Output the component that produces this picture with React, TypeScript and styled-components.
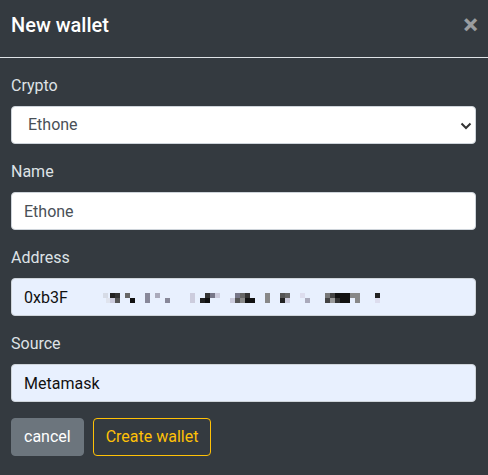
import styled, { createGlobalStyle } from "styled-components";

const GlobalStyle = createGlobalStyle`
  html, body {
    margin: 0;
    padding: 0;
    background-color: #343a40;
    font-family: Roboto, "Liberation Sans", sans-serif;
  }
  * {
    box-sizing: border-box;
  }
`;

const Modal = styled.div`
  width: 488px;
  min-height: 475px;
  background-color: #343a40;
  display: flex;
  flex-direction: column;
`;

const Header = styled.div`
  display: flex;
  align-items: flex-start;
  justify-content: space-between;
  padding: 10px 10px 17px 11px;
  border-bottom: 1px solid #dee2e6;
`;

const Title = styled.h5`
  margin: 0;
  font-size: 20px;
  font-weight: 500;
  line-height: 30px;
  color: #fff;
`;

const Close = styled.button`
  background: transparent;
  border: 0;
  padding: 0;
  margin-top: 1px;
  font-family: Roboto, "Liberation Sans", sans-serif;
  font-size: 28px;
  font-weight: 700;
  line-height: 1;
  color: #fff;
  opacity: 0.5;
`;

const Body = styled.div`
  padding: 16px 12px 0 11px;
`;

const FormGroup = styled.div`
  margin-bottom: 16px;
`;

const Label = styled.label`
  display: block;
  margin-bottom: 8px;
  font-size: 16px;
  line-height: 24px;
  color: #dee2e6;
`;

const Field = styled.div`
  position: relative;
`;

const Input = styled.input<{ $autofill?: boolean }>`
  display: block;
  width: 100%;
  height: 38px;
  padding: 6px 12px;
  font-family: Roboto, "Liberation Sans", sans-serif;
  font-size: 16px;
  line-height: 24px;
  color: ${(p) => (p.$autofill ? "#111" : "#495057")};
  background-color: ${(p) => (p.$autofill ? "#e8f0fe" : "#fff")};
  border: 1px solid #ced4da;
  border-radius: 4px;
  outline: none;
`;

const Select = styled.select`
  display: block;
  width: 100%;
  height: 38px;
  padding: 6px 12px 6px 16px;
  font-family: Roboto, "Liberation Sans", sans-serif;
  font-size: 16px;
  line-height: 24px;
  color: #495057;
  background-color: #fff;
  border: 1px solid #ced4da;
  border-radius: 4px;
  appearance: none;
  outline: none;
`;

const Chevron = styled.svg`
  position: absolute;
  right: 4px;
  top: 16px;
  pointer-events: none;
`;

const Redaction = styled.svg`
  position: absolute;
  left: 89px;
  top: 7px;
  pointer-events: none;
`;

const Actions = styled.div`
  display: flex;
  gap: 9px;
`;

const Button = styled.button<{ $variant: "secondary" | "warning" }>`
  height: 38px;
  padding: 6px 12px;
  font-family: Roboto, "Liberation Sans", sans-serif;
  font-size: 16px;
  line-height: 24px;
  border-radius: 4px;
  border: 1px solid ${(p) => (p.$variant === "secondary" ? "#6c757d" : "#ffc107")};
  background-color: ${(p) => (p.$variant === "secondary" ? "#6c757d" : "transparent")};
  color: ${(p) => (p.$variant === "secondary" ? "#fff" : "#ffc107")};
`;

// pixelated redaction blocks: [x, y, colour]
const cells: [number, number, string][] = [
  [3, 8, "#d6dbe6"], [6, 13, "#e0e4ee"],
  [10, 8, "#222"], [15, 8, "#333"], [10, 13, "#ccd"], [15, 13, "#555"],
  [25, 8, "#666"], [30, 13, "#111"],
  [45, 8, "#889"], [45, 13, "#889"],
  [55, 8, "#aab"], [65, 13, "#889"],
  [90, 8, "#ccd"], [90, 13, "#ccd"],
  [100, 13, "#222"], [105, 8, "#333"], [105, 13, "#111"], [110, 8, "#778"], [115, 8, "#ccd"],
  [130, 13, "#ccd"], [135, 8, "#778"], [135, 13, "#555"], [140, 8, "#666"], [140, 13, "#888"],
  [145, 8, "#333"], [145, 13, "#111"], [150, 13, "#111"],
  [165, 8, "#888"], [165, 13, "#888"],
  [180, 8, "#555"], [185, 8, "#666"], [180, 13, "#222"], [185, 13, "#ccd"],
  [200, 8, "#dde"], [205, 13, "#aab"],
  [225, 8, "#777"], [225, 13, "#444"], [230, 8, "#444"], [230, 13, "#999"],
  [235, 8, "#111"], [235, 13, "#333"], [240, 8, "#111"], [240, 13, "#111"],
  [245, 8, "#111"], [245, 13, "#111"], [250, 8, "#888"], [255, 8, "#888"], [255, 13, "#888"],
  [275, 8, "#222"], [275, 13, "#dde"],
];

export default function App() {
  return (
    <>
      <GlobalStyle />
      <Modal>
        <Header>
          <Title>New wallet</Title>
          <Close>×</Close>
        </Header>
        <Body>
          <FormGroup>
            <Label>Crypto</Label>
            <Field>
              <Select defaultValue="Ethone">
                <option>Ethone</option>
              </Select>
              <Chevron width="12" height="8" viewBox="0 0 12 8">
                <path d="M1.5 1.5 L6 6 L10.5 1.5" fill="none" stroke="#333" strokeWidth="2" />
              </Chevron>
            </Field>
          </FormGroup>
          <FormGroup>
            <Label>Name</Label>
            <Input defaultValue="Ethone" />
          </FormGroup>
          <FormGroup>
            <Label>Address</Label>
            <Field>
              <Input $autofill defaultValue="0xb3F" />
              <Redaction width="290" height="22" viewBox="0 0 290 22">
                {cells.map(([x, y, c], i) => (
                  <rect key={i} x={x} y={y} width="5" height="5" fill={c} />
                ))}
              </Redaction>
            </Field>
          </FormGroup>
          <FormGroup>
            <Label>Source</Label>
            <Input $autofill defaultValue="Metamask" />
          </FormGroup>
          <Actions>
            <Button $variant="secondary">cancel</Button>
            <Button $variant="warning">Create wallet</Button>
          </Actions>
        </Body>
      </Modal>
    </>
  );
}
